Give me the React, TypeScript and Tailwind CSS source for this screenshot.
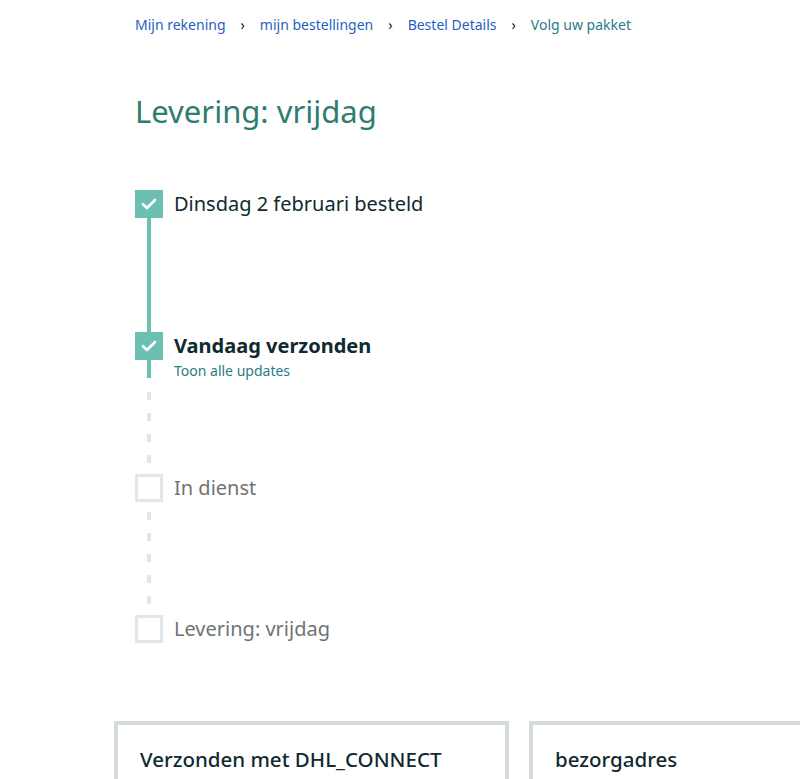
import React from "react";

const font = { fontFamily: '"Noto Sans", "Open Sans", Arial, sans-serif' };

function Check() {
  return (
    <div className="w-[28px] h-[28px] bg-[#6cc0b2] flex items-center justify-center shrink-0">
      <svg width="16" height="12" viewBox="0 0 16 12" fill="none">
        <path d="M2 6.2 L6 10 L14 2" stroke="white" strokeWidth="2.6" strokeLinecap="round" strokeLinejoin="round" />
      </svg>
    </div>
  );
}

function Empty() {
  return <div className="w-[28px] h-[28px] border-[3px] border-[#e3e6e6] bg-white shrink-0" />;
}

function Dashes({ n }: { n: number }) {
  return (
    <div className="flex flex-col gap-[13px] items-center">
      {Array.from({ length: n }).map((_, i) => (
        <div key={i} className="w-[4px] h-[8px] bg-[#e3e6e6]" />
      ))}
    </div>
  );
}

export default function App() {
  return (
    <div className="w-[800px] h-[779px] overflow-hidden bg-white text-[#0f1111]" style={font}>
      <div className="pl-[114px]">
        <div className="pl-[21px]">
          <nav className="pt-[14px] flex items-center text-[14px] leading-[22px]">
            <span className="text-[#1f5fbf]">Mijn rekening</span>
            <span className="mx-[15px] text-[#0f1111] text-[14px]">›</span>
            <span className="text-[#1f5fbf]">mijn bestellingen</span>
            <span className="mx-[15px] text-[#0f1111] text-[14px]">›</span>
            <span className="text-[#1f5fbf]">Bestel Details</span>
            <span className="mx-[15px] text-[#0f1111] text-[14px]">›</span>
            <span className="text-[#2b7b85]">Volg uw pakket</span>
          </nav>

          <h1 className="mt-[55px] text-[31px] leading-[40px] text-[#2e7d6e]">Levering: vrijdag</h1>

          <div className="mt-[59px]">
            {/* step 1 */}
            <div className="flex h-[142px]">
              <div className="flex flex-col items-center w-[28px]">
                <Check />
                <div className="w-[4px] flex-1 bg-[#6cc0b2]" />
              </div>
              <div className="ml-[11px] text-[20px] leading-[28px] text-[#0f2a30]">Dinsdag 2 februari besteld</div>
            </div>
            {/* step 2 */}
            <div className="flex h-[142px]">
              <div className="flex flex-col items-center w-[28px]">
                <Check />
                <div className="w-[4px] h-[18px] bg-[#6cc0b2]" />
                <div className="mt-[14px]">
                  <Dashes n={4} />
                </div>
              </div>
              <div className="ml-[11px]">
                <div className="text-[20px] leading-[28px] font-bold text-[#0f2a30]">Vandaag verzonden</div>
                <div className="text-[14px] leading-[22px] text-[#2b7b85]">Toon alle updates</div>
              </div>
            </div>
            {/* step 3 */}
            <div className="flex h-[141px]">
              <div className="flex flex-col items-center w-[28px]">
                <Empty />
                <div className="mt-[10px]">
                  <Dashes n={5} />
                </div>
              </div>
              <div className="ml-[11px] text-[20px] leading-[28px] text-[#6f7373]">In dienst</div>
            </div>
            {/* step 4 */}
            <div className="flex">
              <div className="flex flex-col items-center w-[28px]">
                <Empty />
              </div>
              <div className="ml-[11px] text-[20px] leading-[28px] text-[#6f7373]">Levering: vrijdag</div>
            </div>
          </div>
        </div>

        <div className="mt-[78px] flex gap-[20px]">
          <div className="w-[395px] shrink-0 h-[120px] border-[4px] border-[#d5dbdb] px-[22px] pt-[20px]">
            <div className="text-[20.5px] leading-[28px] font-medium text-[#0f2a30]">Verzonden met DHL_CONNECT</div>
          </div>
          <div className="w-[395px] shrink-0 h-[120px] border-[4px] border-[#d5dbdb] px-[22px] pt-[20px]">
            <div className="text-[20.5px] leading-[28px] font-medium text-[#0f2a30]">bezorgadres</div>
          </div>
        </div>
      </div>
    </div>
  );
}
